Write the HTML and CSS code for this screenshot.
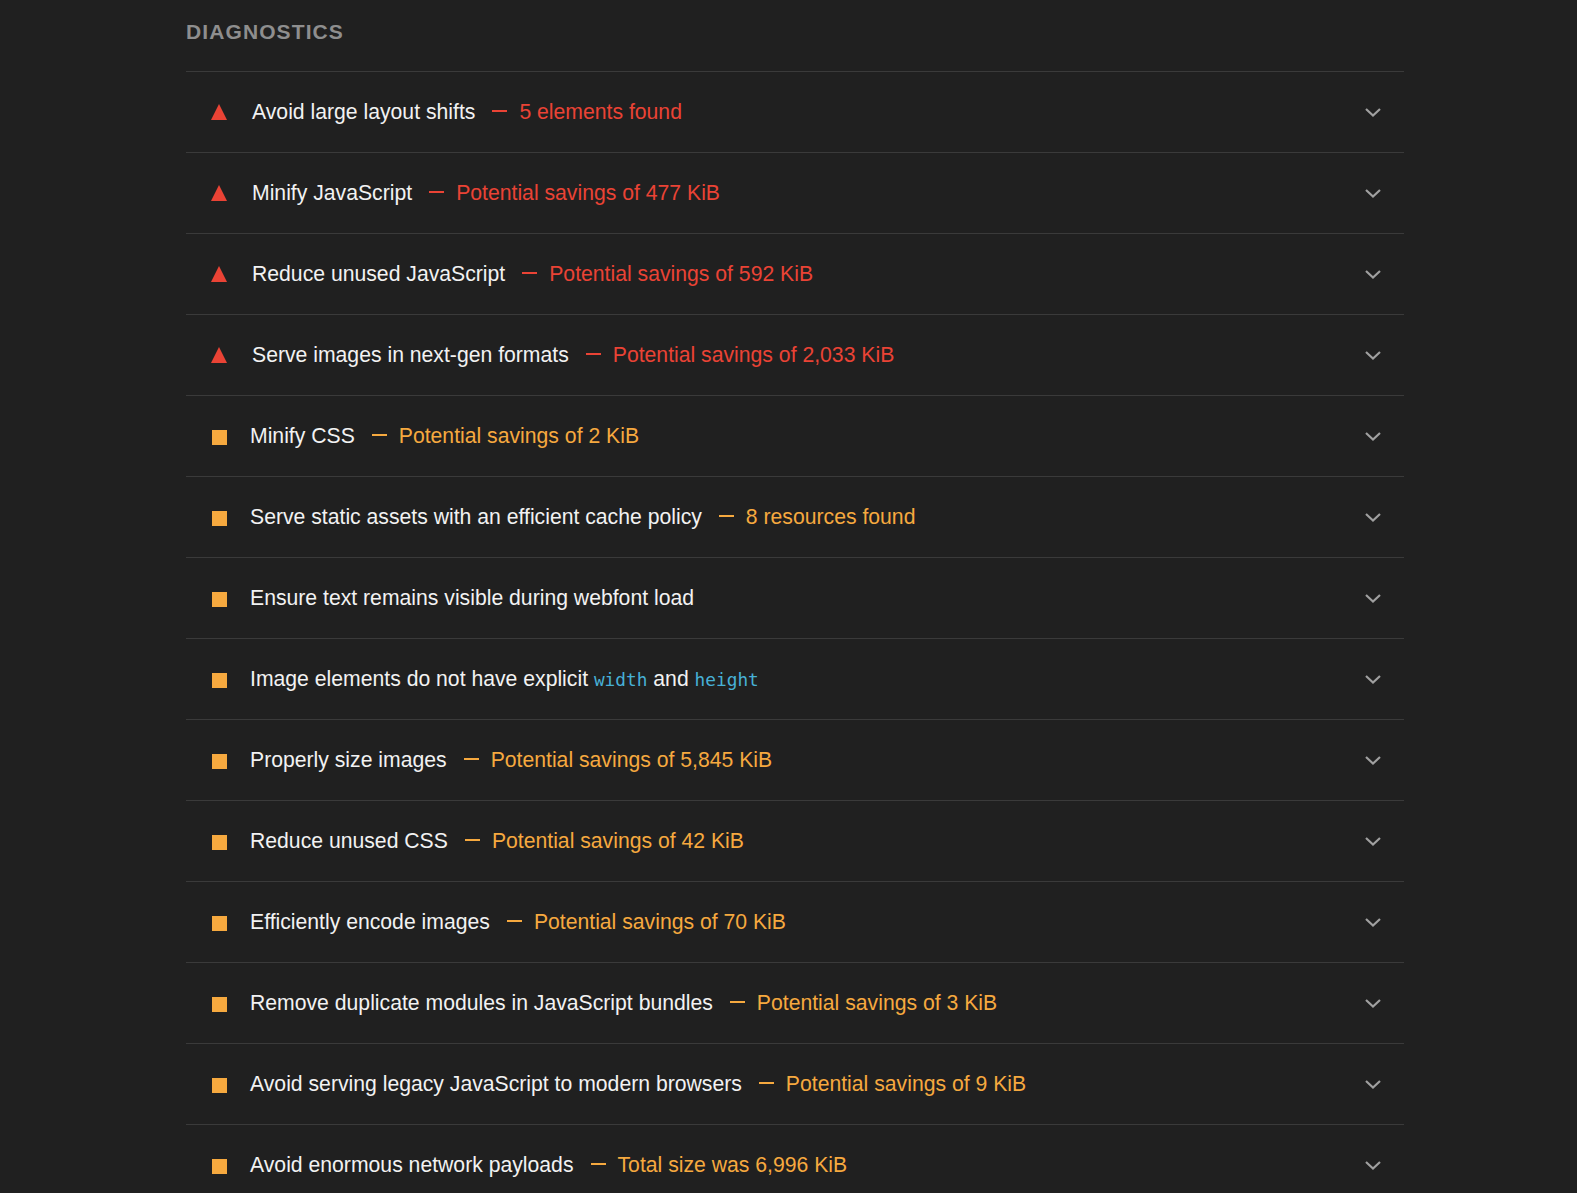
FILE: index.html
```html
<!DOCTYPE html>
<html lang="en">
<head>
<meta charset="utf-8">
<title>Diagnostics</title>
<link rel="stylesheet" href="styles.css">
</head>
<body>
<section class="group">
  <h2 class="group-title">Diagnostics</h2>
  <div class="audits">
    <div class="audit fail">
      <span class="icon"><svg viewBox="0 0 18 18" width="18" height="18"><polygon points="9,1 17,17 1,17"/></svg></span>
      <span class="title">Avoid large layout shifts</span>
      <span class="display">5 elements found</span>
      <span class="chev"><svg viewBox="0 0 18 10" width="18" height="10"><polyline points="2,2 9,8.5 16,2"/></svg></span>
    </div>
    <div class="audit fail">
      <span class="icon"><svg viewBox="0 0 18 18" width="18" height="18"><polygon points="9,1 17,17 1,17"/></svg></span>
      <span class="title">Minify JavaScript</span>
      <span class="display">Potential savings of 477 KiB</span>
      <span class="chev"><svg viewBox="0 0 18 10" width="18" height="10"><polyline points="2,2 9,8.5 16,2"/></svg></span>
    </div>
    <div class="audit fail">
      <span class="icon"><svg viewBox="0 0 18 18" width="18" height="18"><polygon points="9,1 17,17 1,17"/></svg></span>
      <span class="title">Reduce unused JavaScript</span>
      <span class="display">Potential savings of 592 KiB</span>
      <span class="chev"><svg viewBox="0 0 18 10" width="18" height="10"><polyline points="2,2 9,8.5 16,2"/></svg></span>
    </div>
    <div class="audit fail">
      <span class="icon"><svg viewBox="0 0 18 18" width="18" height="18"><polygon points="9,1 17,17 1,17"/></svg></span>
      <span class="title">Serve images in next-gen formats</span>
      <span class="display">Potential savings of 2,033 KiB</span>
      <span class="chev"><svg viewBox="0 0 18 10" width="18" height="10"><polyline points="2,2 9,8.5 16,2"/></svg></span>
    </div>
    <div class="audit avg">
      <span class="icon"><span class="sq"></span></span>
      <span class="title">Minify CSS</span>
      <span class="display">Potential savings of 2 KiB</span>
      <span class="chev"><svg viewBox="0 0 18 10" width="18" height="10"><polyline points="2,2 9,8.5 16,2"/></svg></span>
    </div>
    <div class="audit avg">
      <span class="icon"><span class="sq"></span></span>
      <span class="title">Serve static assets with an efficient cache policy</span>
      <span class="display">8 resources found</span>
      <span class="chev"><svg viewBox="0 0 18 10" width="18" height="10"><polyline points="2,2 9,8.5 16,2"/></svg></span>
    </div>
    <div class="audit avg">
      <span class="icon"><span class="sq"></span></span>
      <span class="title">Ensure text remains visible during webfont load</span>
      <span class="chev"><svg viewBox="0 0 18 10" width="18" height="10"><polyline points="2,2 9,8.5 16,2"/></svg></span>
    </div>
    <div class="audit avg">
      <span class="icon"><span class="sq"></span></span>
      <span class="title">Image elements do not have explicit <code>width</code> and <code>height</code></span>
      <span class="chev"><svg viewBox="0 0 18 10" width="18" height="10"><polyline points="2,2 9,8.5 16,2"/></svg></span>
    </div>
    <div class="audit avg">
      <span class="icon"><span class="sq"></span></span>
      <span class="title">Properly size images</span>
      <span class="display">Potential savings of 5,845 KiB</span>
      <span class="chev"><svg viewBox="0 0 18 10" width="18" height="10"><polyline points="2,2 9,8.5 16,2"/></svg></span>
    </div>
    <div class="audit avg">
      <span class="icon"><span class="sq"></span></span>
      <span class="title">Reduce unused CSS</span>
      <span class="display">Potential savings of 42 KiB</span>
      <span class="chev"><svg viewBox="0 0 18 10" width="18" height="10"><polyline points="2,2 9,8.5 16,2"/></svg></span>
    </div>
    <div class="audit avg">
      <span class="icon"><span class="sq"></span></span>
      <span class="title">Efficiently encode images</span>
      <span class="display">Potential savings of 70 KiB</span>
      <span class="chev"><svg viewBox="0 0 18 10" width="18" height="10"><polyline points="2,2 9,8.5 16,2"/></svg></span>
    </div>
    <div class="audit avg">
      <span class="icon"><span class="sq"></span></span>
      <span class="title">Remove duplicate modules in JavaScript bundles</span>
      <span class="display">Potential savings of 3 KiB</span>
      <span class="chev"><svg viewBox="0 0 18 10" width="18" height="10"><polyline points="2,2 9,8.5 16,2"/></svg></span>
    </div>
    <div class="audit avg">
      <span class="icon"><span class="sq"></span></span>
      <span class="title">Avoid serving legacy JavaScript to modern browsers</span>
      <span class="display">Potential savings of 9 KiB</span>
      <span class="chev"><svg viewBox="0 0 18 10" width="18" height="10"><polyline points="2,2 9,8.5 16,2"/></svg></span>
    </div>
    <div class="audit avg">
      <span class="icon"><span class="sq"></span></span>
      <span class="title">Avoid enormous network payloads</span>
      <span class="display">Total size was 6,996 KiB</span>
      <span class="chev"><svg viewBox="0 0 18 10" width="18" height="10"><polyline points="2,2 9,8.5 16,2"/></svg></span>
    </div>
  </div>
</section>
</body>
</html>
```

FILE: styles.css
```css
html, body {
  margin: 0;
  padding: 0;
  background: #202020;
  height: 100%;
  overflow: hidden;
}

body {
  font-family: "Liberation Sans", Arial, sans-serif;
  color: #f2f2f2;
}

.group {
  width: 1218px;
  margin-left: 186px;
}

.group-title {
  margin: 0;
  padding-top: 20px;
  height: 71px;
  box-sizing: border-box;
  font-size: 21px;
  line-height: 24px;
  font-weight: bold;
  letter-spacing: 1.1px;
  text-transform: uppercase;
  color: #8e8e8e;
}

.audit {
  display: flex;
  align-items: center;
  height: 81px;
  box-sizing: border-box;
  border-top: 1px solid #3a3a3a;
  font-size: 21.2px;
}

.icon {
  display: flex;
  align-items: center;
  justify-content: center;
  width: 18px;
  height: 18px;
}

.fail .icon svg polygon { fill: #ea4335; }
.fail .icon { margin-right: 24px; margin-left: 24px; }

.avg .icon { margin-right: 22px; margin-left: 24px; }

.sq {
  display: block;
  width: 15px;
  height: 15px;
  background: #f6a93f;
  margin-top: 3px;
}

.title {
  white-space: nowrap;
}

.title code {
  font-family: "DejaVu Sans Mono", "Liberation Mono", monospace;
  font-size: 17.8px;
  color: #47b0d6;
}

.display {
  white-space: nowrap;
}

.display::before {
  content: "";
  display: inline-block;
  width: 15px;
  border-top: 2px solid currentColor;
  vertical-align: 0.32em;
  margin: 0 12px 0 17px;
}

.fail .display { color: #ea4335; }
.avg .display { color: #f6a93f; }

.chev {
  margin-left: auto;
  margin-right: 22px;
  display: flex;
  align-items: center;
}

.chev svg polyline {
  fill: none;
  stroke: #a0a0a0;
  stroke-width: 2.2;
}
```
